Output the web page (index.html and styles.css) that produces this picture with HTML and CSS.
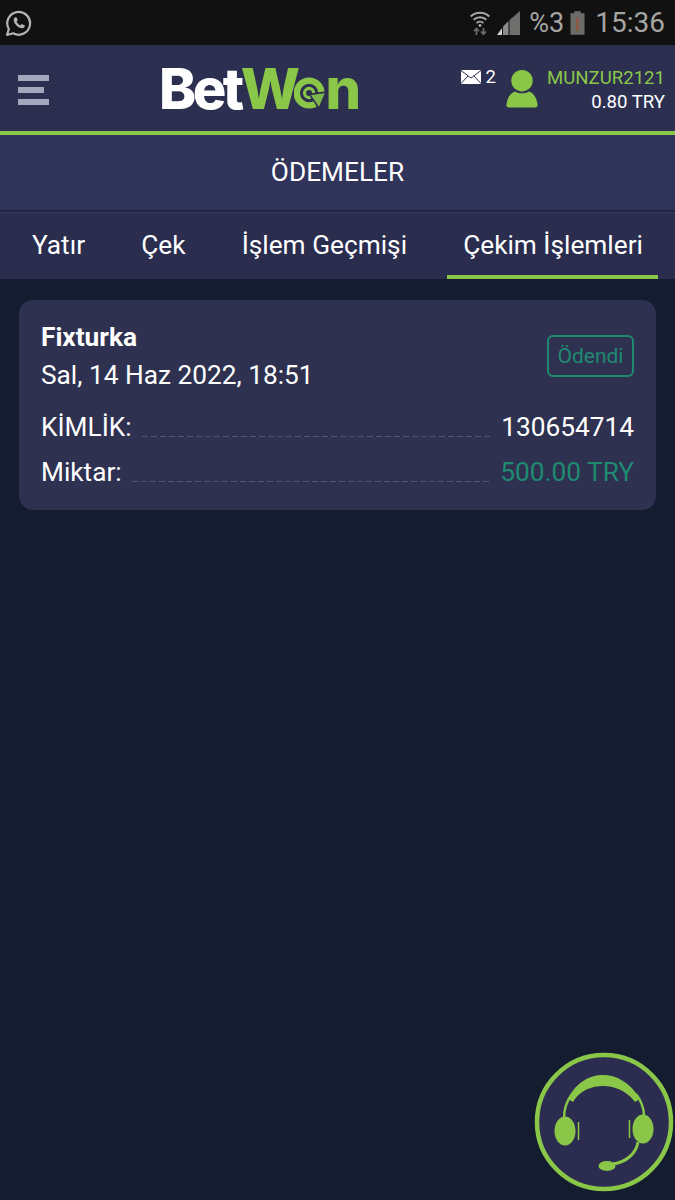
FILE: index.html
```html
<!DOCTYPE html>
<html lang="tr">
<head>
<meta charset="utf-8">
<title>Ödemeler</title>
<link rel="stylesheet" href="styles.css">
</head>
<body>
<div class="status">
  <svg class="wa" width="28" height="28" viewBox="0 0 28 28" fill="none">
    <path d="M2 26l1.800-6A11.400 11.400 0 1 1 8.200 24.300z" stroke="#b4b4b0" stroke-width="2.200" stroke-linejoin="round"/>
    <path d="M10.500 8.200c-1.400.6-2.100 2-1.700 3.700.9 3.400 3.800 6.300 7.200 7.200 1.700.4 3.200-.3 3.800-1.700.2-.5 0-.9-.4-1.100l-2.200-1.100c-.4-.2-.7-.1-1 .2l-.8 1c-1.700-.7-3.100-2.100-3.900-3.800l.9-.9c.3-.3.3-.6.2-1l-1-2.100c-.2-.4-.7-.6-1.100-.4z" fill="#b4b4b0"/>
  </svg>
  <div class="status-right">
    <svg class="wifi" width="20" height="24" viewBox="0 0 20 24" fill="none" stroke="#a8a8a6">
      <path d="M.7 5.500c5-5 13.600-5 18.600 0" stroke-width="2"/>
      <path d="M3.600 8.800c3.600-3.400 9.200-3.400 12.800 0" stroke-width="2"/>
      <path d="M6.600 12c1.900-1.700 4.900-1.700 6.800 0" stroke-width="2"/>
      <circle cx="10" cy="14.500" r="1.400" fill="#a8a8a6" stroke="none"/>
      <path d="M6.500 24v-6M4 20.300l2.500-2.800 2.500 2.800M13.500 17v6M11 20.500l2.500 2.800 2.500-2.800" stroke="#6b6b69" stroke-width="1.700"/>
    </svg>
    <svg class="signal" width="23" height="24" viewBox="0 0 23 24">
      <path d="M23 0v24H12.500V9z" fill="#6f6f6d"/>
      <path d="M11.500 10v14H6v-8.500z" fill="#8c8c8a"/>
      <path d="M5 17v7H0z" fill="#cfcfcd"/>
    </svg>
    <span class="pct">%3</span>
    <svg class="battery" width="15" height="24" viewBox="0 0 16 25">
      <path d="M4.500 0h7v2h4v23H.5V2h4z" fill="#6e6c69"/>
      <rect x="6.500" y="7" width="3" height="14" fill="#8a5a45"/>
    </svg>
    <span class="clock">15:36</span>
  </div>
</div>

<header class="topbar">
  <div class="burger"><i></i><i class="short"></i><i></i></div>
  <div class="logo">
    <span class="logo-bet">Bet</span><span class="logo-won">W<svg class="logo-o" width="32" height="32" viewBox="0 0 35 35" fill="none">
      <circle cx="16.500" cy="17.500" r="13.500" stroke="#8ac749" stroke-width="7"/>
      <circle cx="16.500" cy="17.500" r="5" stroke="#8ac749" stroke-width="3.500"/>
      <path d="M17 19l18-2.500-7.500 18z" fill="#7fb84a" stroke="#2c2f50" stroke-width="1.800"/>
    </svg>n</span>
  </div>
  <div class="account">
    <div class="mail">
      <svg width="20" height="14" viewBox="0 0 20 14">
        <rect width="20" height="14" fill="#fff" rx="1"/>
        <path d="M0 .5l10 7.500L20 .5M0 13.500l7-7.500M20 13.500l-7-7.500" fill="none" stroke="#2c2f50" stroke-width="1"/>
      </svg>
      <span>2</span>
    </div>
    <svg class="user" width="32" height="39" viewBox="0 0 32 40">
      <circle cx="16" cy="12" r="11" fill="#8ac749"/>
      <path d="M9 23c2 2.500 12 2.500 14 0 4 1 8 5 9 14 0 1.500-1 2.500-2.500 2.500h-27C1 39.500 0 38.500 0 37c1-9 5-13 9-14z" fill="#8ac749"/>
    </svg>
    <div class="who">
      <div class="name">MUNZUR2121</div>
      <div class="balance">0.80 TRY</div>
    </div>
  </div>
</header>

<div class="page-title">ÖDEMELER</div>

<nav class="tabs">
  <a class="tab">Yatır</a>
  <a class="tab">Çek</a>
  <a class="tab">İşlem Geçmişi</a>
  <a class="tab active">Çekim İşlemleri</a>
</nav>

<main class="content">
  <section class="card">
    <div class="card-head">
      <div>
        <div class="method">Fixturka</div>
        <div class="date">Sal, 14 Haz 2022, 18:51</div>
      </div>
      <span class="badge">Ödendi</span>
    </div>
    <div class="row"><span>KİMLİK:</span><i class="dots"></i><span>130654714</span></div>
    <div class="row"><span>Miktar:</span><i class="dots"></i><span class="paid">500.00 TRY</span></div>
  </section>
</main>

<button class="support" type="button" aria-label="Canlı destek">
  <svg width="140" height="140" viewBox="0 0 140 140" fill="none">
    <circle cx="70" cy="70" r="67" fill="#2c2c50" stroke="#8ac749" stroke-width="4.500"/>
    <path d="M34 47C42 30 56 23 69 23s27 7 37 24l-5 3C92 38 80 34 69 34s-23 4-30 16z" fill="#8ac749"/>
    <path d="M38 42c-6 8-8 16-8 24M102 42c6 8 8 16 8 22" stroke="#8ac749" stroke-width="2.500"/>
    <ellipse cx="31" cy="79" rx="10.500" ry="14.500" fill="#8ac749"/>
    <ellipse cx="109" cy="77" rx="10.500" ry="14.500" fill="#8ac749"/>
    <path d="M44.500 70v18M95.500 68v18" stroke="#8ac749" stroke-width="1.500"/>
    <path d="M104 90c-2 12-12 20-25 22" stroke="#8ac749" stroke-width="3"/>
    <ellipse cx="73" cy="114" rx="8.500" ry="5" fill="#8ac749"/>
  </svg>
</button>
</body>
</html>
```

FILE: styles.css
```css
* { box-sizing: border-box; }

html, body {
  margin: 0;
  height: 100%;
}

body {
  position: relative;
  height: 1200px;
  overflow: hidden;
  background: #141c2f;
  color: #fff;
  font-family: Roboto, "Liberation Sans", sans-serif;
}

/* Phone status bar */
.status {
  height: 45px;
  background: #111112;
  display: flex;
  justify-content: space-between;
  align-items: center;
  padding: 0 10px 0 5px;
  color: #a5a5a3;
}

.status-right {
  display: flex;
  align-items: center;
}

.signal { margin-left: 7px; }
.pct { font-size: 27px; margin-left: 9px; }
.battery { margin-left: 6px; }
.clock { font-size: 28px; margin-left: 10px; }

/* Site header */
.topbar {
  height: 90px;
  background: #2c2f50;
  border-bottom: 4px solid #8ac749;
  display: flex;
  align-items: center;
  padding: 0 10px 0 18px;
}

.burger {
  width: 31px;
  display: flex;
  flex-direction: column;
  gap: 6px;
  margin-top: 4px;
}

.burger i {
  height: 6px;
  background: #a4a6bb;
}

.burger i.short { width: 26px; }

.logo {
  margin-left: 110px;
  display: flex;
  align-items: baseline;
  font-family: Inter, "Liberation Sans", sans-serif;
  font-weight: 800;
  font-size: 56px;
  line-height: 1;
  letter-spacing: -3.500px;
  margin-top: 2px;
}

.logo-bet { color: #fff; }
.logo-won { color: #8ac749; display: inline-flex; align-items: baseline; }
.logo-o { margin: 0 0 -1px -3px; }

.account {
  margin-left: auto;
  display: flex;
  align-items: flex-start;
  margin-top: 4px;
}

.mail {
  display: flex;
  align-items: center;
  gap: 5px;
  font-size: 18.500px;
}

.user { margin: 3px 0 0 10px; }

.who {
  margin-left: 9px;
  text-align: right;
  font-size: 18.600px;
  line-height: 24px;
}

.name { color: #8ac749; }

/* Section heading */
.page-title {
  height: 77px;
  background: #30335a;
  border-bottom: 2px solid #1f2440;
  display: flex;
  align-items: center;
  justify-content: center;
  font-size: 26.250px;
  padding-bottom: 1px;
}

/* Payment tabs */
.tabs {
  height: 67px;
  background: #2a2d4e;
  border-top: 1px solid #363a5a;
  display: flex;
  padding: 0 17px 0 16px;
  justify-content: space-between;
}

.tab {
  height: 66px;
  padding: 2px 15px 0 16px;
  display: flex;
  align-items: center;
  font-size: 26.250px;
  border-bottom: 4px solid transparent;
}

.tab.active {
  border-bottom-color: #8ac749;
}

/* Withdrawal list */
.content {
  padding: 21px 19px;
}

.card {
  height: 210px;
  background: #2e3150;
  border-radius: 14px;
  padding: 20px 22px;
}

.card-head {
  display: flex;
  justify-content: space-between;
  align-items: center;
  margin-bottom: 13px;
}

.method {
  font-size: 26.250px;
  font-weight: 700;
  line-height: 34px;
  margin-bottom: 4px;
}

.date {
  font-size: 26.250px;
  line-height: 34px;
}

.badge {
  width: 87px;
  height: 42px;
  margin-top: -1px;
  border: 2px solid #1f8a70;
  border-radius: 6px;
  color: #1f8a70;
  font-size: 21px;
  display: flex;
  align-items: center;
  justify-content: center;
}

.row {
  display: flex;
  align-items: center;
  font-size: 26.250px;
  line-height: 45px;
}

.dots {
  flex: 1;
  height: 1px;
  margin: 18px 10px 0;
  background: repeating-linear-gradient(90deg, #50547a 0 6px, transparent 6px 9px);
}

.paid { color: #1f8a70; }

/* Floating live-support button */
.support {
  position: absolute;
  right: 1px;
  bottom: 8px;
  width: 140px;
  height: 140px;
  padding: 0;
  border: 0;
  background: none;
}

.support svg { display: block; }
```
